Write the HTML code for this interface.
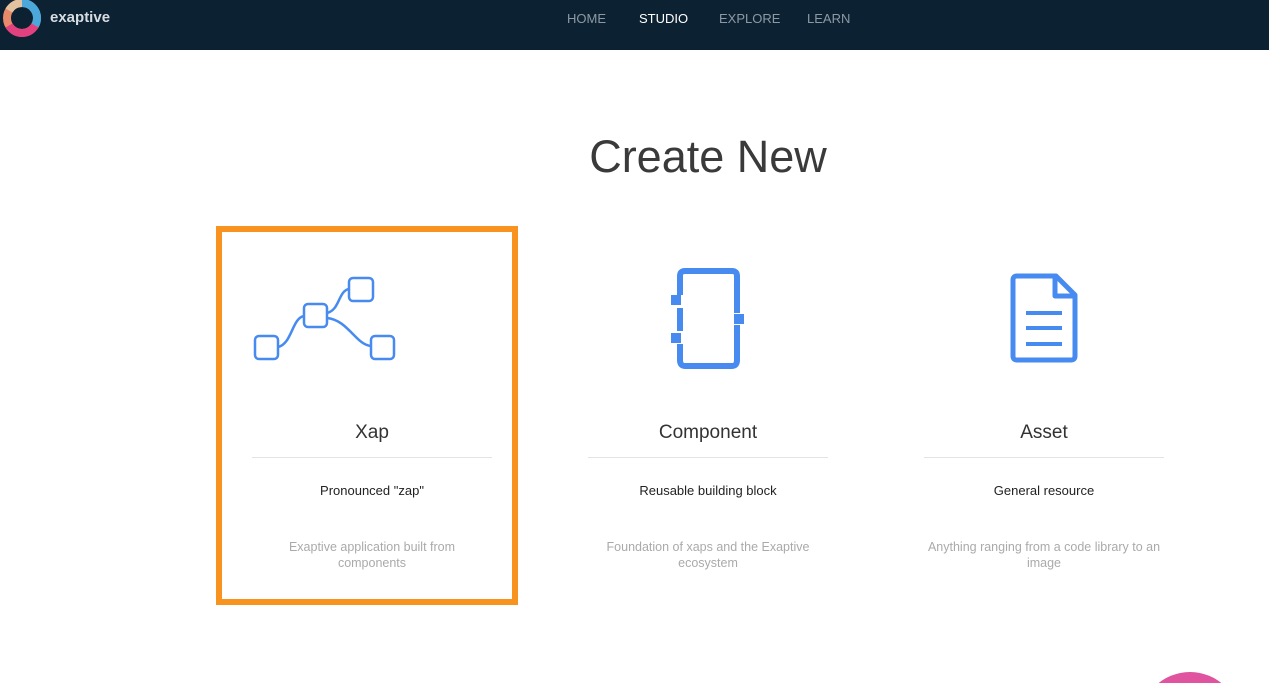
<!DOCTYPE html>
<html><head><meta charset="utf-8"><style>
html,body{margin:0;width:1269px;height:683px;overflow:hidden}
body{background:#fff;font-family:"Liberation Sans",sans-serif;position:relative}
.nav{position:absolute;left:0;top:0;width:1269px;height:50px;background:#0c2233}
.nav a{position:absolute;top:11px;font-size:13px;color:#8c99a4;text-decoration:none}
.logo{position:absolute;left:50px;top:9px;color:#d8dde2;font-weight:bold;font-size:15px}
h1{position:absolute;left:508px;width:400px;text-align:center;top:131px;margin:0;font-weight:normal;font-size:45px;color:#3a3a3a}
.t{position:absolute;top:422px;font-size:19px;color:#333;width:240px;text-align:center}
.ln{position:absolute;top:457px;height:1px;background:#e3e3e3;width:240px}
.s{position:absolute;top:483px;font-size:13px;color:#222;width:240px;text-align:center}
.d{position:absolute;top:539px;font-size:12.5px;color:#aaa;text-align:center;line-height:16px}
.box{position:absolute;left:216px;top:226px;width:290px;height:367px;border:6px solid #f7931e}
</style></head><body>
<div class="nav">
<svg style="position:absolute;left:2px;top:0" width="40" height="38" viewBox="0 0 40 38">
<circle cx="20" cy="18" r="15" fill="none" stroke="#e98a6b" stroke-width="8"/>
<path d="M20 3 A15 15 0 0 1 33 25.5" fill="none" stroke="#4aa8dc" stroke-width="8"/>
<path d="M33 25.5 A15 15 0 0 1 7 25.5" fill="none" stroke="#e2407e" stroke-width="8"/>
<path d="M20 3 A15 15 0 0 0 7 10.5" fill="none" stroke="#e3c2a0" stroke-width="8"/>
<polygon points="20,11 26,14.5 26,21.5 20,25 14,21.5 14,14.5" fill="none" stroke="#0c2233" stroke-width="2"/>
</svg>
<div class="logo">exaptive</div>
<a style="left:567px">HOME</a><a style="left:639px;color:#fff">STUDIO</a><a style="left:719px">EXPLORE</a><a style="left:807px">LEARN</a>
</div>
<h1>Create New</h1>
<div class="box"></div>
<svg style="position:absolute;left:0;top:0" width="1269" height="683">
<g fill="none" stroke="#478bf0" stroke-width="2.5">
<rect x="255" y="336" width="23" height="23" rx="4"/>
<rect x="304" y="304" width="23" height="23" rx="4"/>
<rect x="349" y="278" width="24" height="23" rx="4"/>
<rect x="371" y="336" width="23" height="23" rx="4"/>
<path d="M278 347 C292 344 292 318 304 316"/>
<path d="M327 313 C340 310 338 291 349 289"/>
<path d="M327 318 C348 320 356 345 371 346"/>
</g>
<g stroke="#478bf0" stroke-width="6" fill="none">
<path d="M680 295 V276 Q680 271 685 271 H732 Q737 271 737 276 V313"/>
<path d="M737 325 V360 Q737 366 732 366 H685 Q680 366 680 360 V344"/>
<path d="M680 308 V331"/>
</g>
<g fill="#478bf0">
<rect x="671" y="295" width="10" height="10"/><rect x="671" y="333" width="10" height="10"/><rect x="734" y="314" width="10" height="10"/>
</g>
<g fill="none" stroke="#478bf0" stroke-width="5" stroke-linejoin="round">
<path d="M1017 276 H1056 L1075 295 V356 Q1075 360 1071 360 H1017 Q1013 360 1013 356 V280 Q1013 276 1017 276 Z"/>
<path d="M1055 277 V296 H1074"/>
<path d="M1026 313 H1062 M1026 328 H1062 M1026 344 H1062" stroke-width="4"/>
</g>
<circle cx="1190" cy="722" r="50" fill="#e0539e"/>
</svg>
<div class="t" style="left:252px">Xap</div><div class="ln" style="left:252px"></div>
<div class="s" style="left:252px">Pronounced "zap"</div>
<div class="d" style="left:272px;width:200px">Exaptive application built from components</div>
<div class="t" style="left:588px">Component</div><div class="ln" style="left:588px"></div>
<div class="s" style="left:588px">Reusable building block</div>
<div class="d" style="left:598px;width:220px">Foundation of xaps and the Exaptive ecosystem</div>
<div class="t" style="left:924px">Asset</div><div class="ln" style="left:924px"></div>
<div class="s" style="left:924px">General resource</div>
<div class="d" style="left:924px;width:240px">Anything ranging from a code library to an image</div>
</body></html>
